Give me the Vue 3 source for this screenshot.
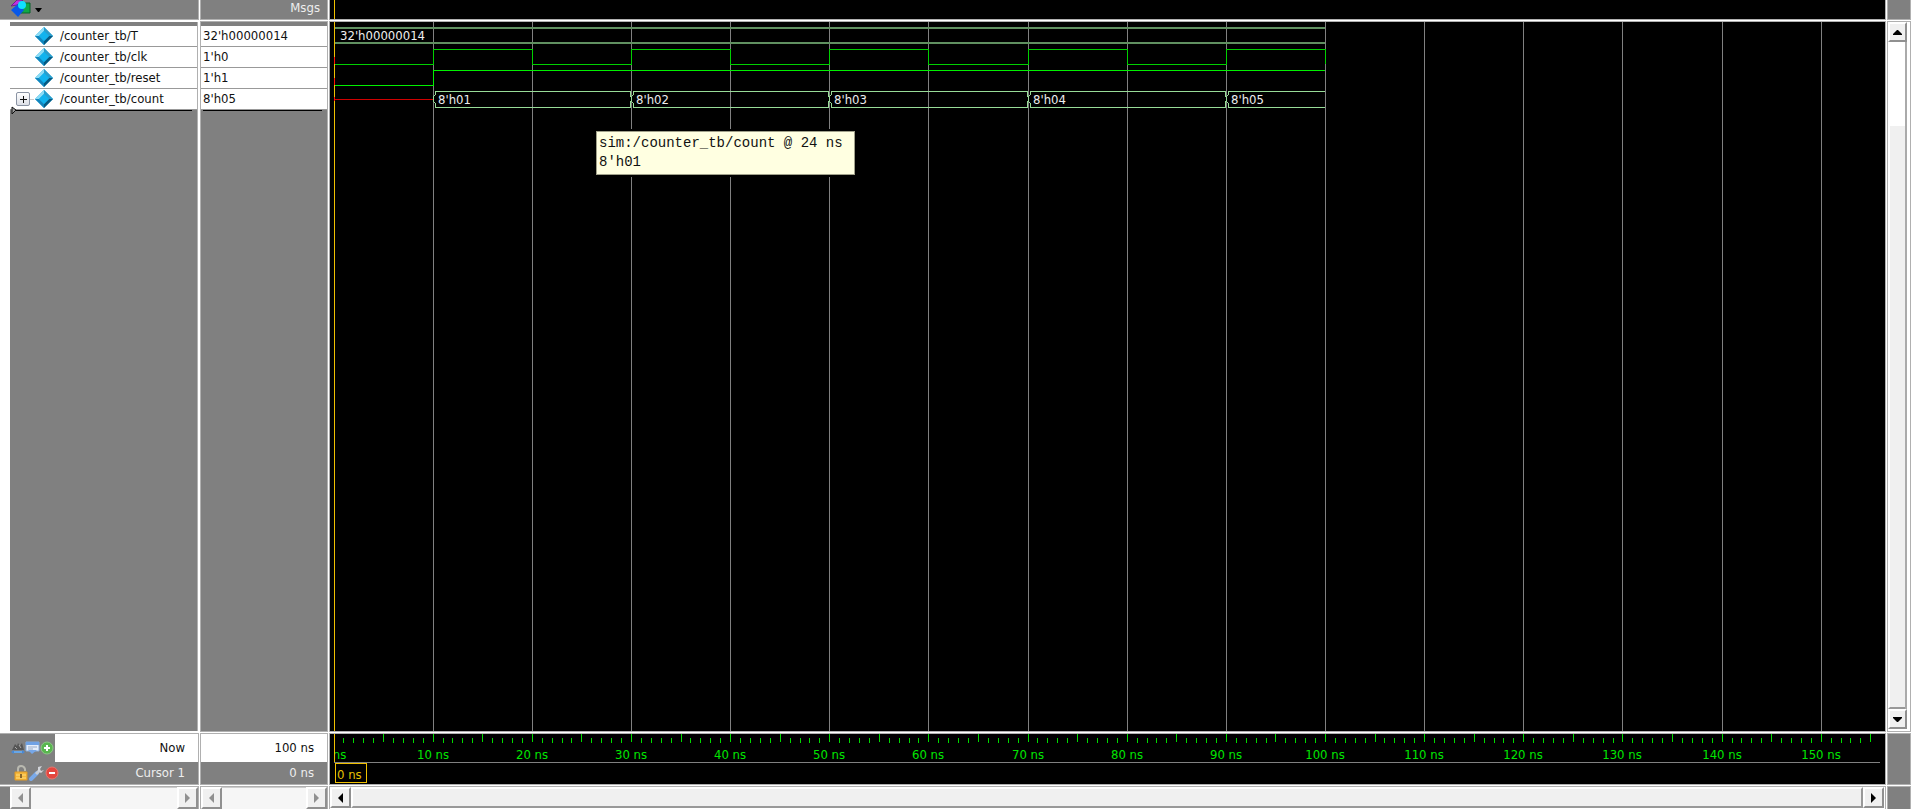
<script setup>
const origin = 4
const nsWidth = 9.915
const at = (ns) => Math.floor(origin + ns * nsWidth)

const signals = [
  { name: '/counter_tb/T', value: "32'h00000014" },
  { name: '/counter_tb/clk', value: "1'h0" },
  { name: '/counter_tb/reset', value: "1'h1" },
  { name: '/counter_tb/count', value: "8'h05", bus: true },
]
const gridTimes = Array.from({ length: 15 }, (_, i) => (i + 1) * 10)
const labelTimes = [0, ...gridTimes]
const ticks = Array.from({ length: 155 }, (_, i) => i + 1)
const segments = [
  { start: 10, end: 30, value: "8'h01" },
  { start: 30, end: 50, value: "8'h02" },
  { start: 50, end: 70, value: "8'h03" },
  { start: 70, end: 90, value: "8'h04" },
  { start: 90, end: 100, value: "8'h05" },
]
const clockPath = () => {
  let d = `M${origin} 42`
  for (let t = 10; t <= 100; t += 10) {
    d += `H${at(t)}V${(t / 10) % 2 ? 27 : 42}`
  }
  return d
}
</script>

<template>
  <main class="viewer">
    <header class="cell head tools">
      <button class="plain menu" aria-label="Object menu">
        <svg width="24" height="19" viewBox="0 0 24 19">
          <path d="M0 6 6 0h6L6 5Z" fill="#c030e0" stroke="#70208a" stroke-width="1" />
          <path d="M10 3h9v10h-9Z" fill="#10a848" stroke="#08642c" />
          <path d="m7 4 6 6-6 7-7-7Z" fill="#0858e8" />
          <circle cx="11" cy="5" r="4" fill="#10e0ff" />
        </svg>
        <svg width="7" height="4" viewBox="0 0 7 4"><path d="M0 0h7L4 4H3Z" fill="#000" /></svg>
      </button>
    </header>
    <div class="cell head msgs">Msgs</div>
    <div class="cell black">
      <svg class="fill"><path :d="`M${origin} 0V19`" class="cursor" /></svg>
    </div>
    <div class="cell side"></div>

    <section class="cell names">
      <ul class="rows">
        <li v-for="s in signals" :key="s.name" class="row">
          <button v-if="s.bus" class="expand" aria-label="Expand count">
            <svg width="7" height="7" viewBox="0 0 7 7"><path d="M0 3h7v1H0ZM3 0h1v7H3Z" fill="#111" /></svg>
          </button>
          <span v-else class="expand-space"></span>
          <span class="link" :class="{ linked: s.bus }"></span>
          <svg class="gem" width="20" height="20" viewBox="0 0 20 20">
            <path d="m10 1 9 9-9 9-9-9Z" fill="#18a5dc" />
            <path d="m10 1-9 9h4l5-5Z" fill="#8cdcf6" />
            <path d="m10 1 9 9h-4l-5-5Z" fill="#2a9dcc" />
            <path d="m1 10 9 9v-4l-5-5Z" fill="#1285bd" />
            <path d="m19 10-9 9v-4l5-5Z" fill="#075a82" />
            <path d="m10 5 5 5-5 5-5-5Z" fill="#12b3ee" />
          </svg>
          <span>{{ s.name }}</span>
        </li>
      </ul>
      <div class="end-line"></div>
      <svg class="marker" width="6" height="9" viewBox="0 0 6 9"><path d="M1 1v7l4-4Z" fill="#999" stroke="#111" /></svg>
    </section>

    <section class="cell values">
      <ul class="rows">
        <li v-for="s in signals" :key="s.name" class="row">{{ s.value }}</li>
      </ul>
      <div class="end-line"></div>
    </section>

    <section class="cell black wave">
      <svg class="fill">
        <path v-for="t in gridTimes" :key="t" :d="`M${at(t)} 0V3000`" class="grid" />
        <path :d="`M${origin} 6H${at(100)}M${origin} 21H${at(100)}`" class="constant" />
        <text x="10" y="18" class="bus-text">32'h00000014</text>
        <path :d="clockPath()" class="clock" />
        <path :d="`M${origin} 63H${at(10)}V48H${at(100)}`" class="reset" />
        <path :d="`M${origin} 77H${at(10)}`" class="unknown" />
        <g v-for="s in segments" :key="s.start">
          <path
            :d="`M${at(s.end)} 69H${at(s.start) + 2}V73L${at(s.start)} 75V79L${at(s.start) + 2} 81V85H${at(s.end)}`"
            class="bus"
          />
          <path
            v-if="s.start > 10"
            :d="`M${at(s.start)} 69H${at(s.start) - 1}V73L${at(s.start)} 75M${at(s.start)} 79L${at(s.start) - 1} 81V85H${at(s.start)}`"
            class="bus"
          />
          <text :x="at(s.start) + 5" y="82" class="bus-text">{{ s.value }}</text>
        </g>
        <path :d="`M${origin} 0V3000`" class="cursor" />
        <path :d="`M${origin} 35V42M${origin} 56V63M${origin} 75V79`" class="initial" />
      </svg>
      <div class="tooltip" role="tooltip">sim:/counter_tb/count @ 24 ns<br />8'h01</div>
    </section>

    <div class="cell vbar">
      <button class="arrow" aria-label="Scroll up">
        <svg width="9" height="5" viewBox="0 0 9 5"><path d="M0 5V4L4 0H5L9 4V5Z" /></svg>
      </button>
      <div class="vtrack"><div class="vthumb"></div></div>
      <button class="arrow" aria-label="Scroll down">
        <svg width="9" height="5" viewBox="0 0 9 5"><path d="M0 0V1L4 5H5L9 1V0Z" /></svg>
      </button>
    </div>

    <section class="cell timing">
      <div class="now-row">
        <div class="icons">
          <button class="plain" aria-label="Find cursor">
            <svg width="14" height="14" viewBox="0 0 14 14">
              <path d="M1 9 4 3l2 2 1-3 2 3 2-3 2 7Z" fill="#555" />
              <path d="m4 6 2 2m2-4 2 3" stroke="#aaa" fill="none" />
              <path d="M1 11h12" stroke="#66a6e8" stroke-width="2" />
              <path d="M3 9 0 11l3 2m8-4 3 2-3 2" fill="#4b87cf" />
            </svg>
          </button>
          <button class="plain" aria-label="Edit grid">
            <svg width="15" height="14" viewBox="0 0 15 14">
              <path d="M1 1h13v9H1Z" fill="#e4eefc" stroke="#86aee0" />
              <path d="M1 1h13v3H1Z" fill="#6fa2e5" />
              <path d="M3 6h9M3 8h5" stroke="#9aabc4" />
              <path d="m3 9 4 4 5-4Z" fill="#76a7e8" />
            </svg>
          </button>
          <button class="plain" aria-label="Add cursor">
            <svg width="14" height="14" viewBox="0 0 14 14">
              <circle cx="7" cy="7" r="6" fill="#59b64f" stroke="#8cc886" />
              <path d="M7 4v6M4 7h6" stroke="#fff" stroke-width="2" />
            </svg>
          </button>
        </div>
        <span class="now">Now</span>
      </div>
      <div class="cursor-row">
        <div class="icons lower">
          <button class="plain" aria-label="Lock cursor">
            <svg width="14" height="16" viewBox="0 0 14 16">
              <path d="M4 7V4q0-3 3-3t4 3v2" fill="none" stroke="#b9b9b0" stroke-width="2" />
              <path d="M1 7h12v8H1Z" fill="#f5b83d" stroke="#e19a25" />
              <path d="M2 10h10M2 13h10" stroke="#ffdc7d" />
              <path d="M7 9v4" stroke="#8a682d" stroke-width="2" />
            </svg>
          </button>
          <button class="plain" aria-label="Configure cursor">
            <svg width="15" height="16" viewBox="0 0 15 16">
              <path d="m2 14 6-6" stroke="#79a9e9" stroke-width="4" stroke-linecap="round" />
              <path d="m7 9 3-3" stroke="#c7cdd5" stroke-width="3" />
              <path d="M9 2v4l3 2 3-3-3 1-1-2 2-3Z" fill="#d2d5da" />
            </svg>
          </button>
          <button class="plain" aria-label="Remove cursor">
            <svg width="14" height="14" viewBox="0 0 14 14">
              <circle cx="7" cy="7" r="6" fill="#e4473f" stroke="#e8766e" />
              <path d="M4 7h6" stroke="#fff" stroke-width="2" />
            </svg>
          </button>
        </div>
        <span>Cursor 1</span>
      </div>
    </section>

    <section class="cell timing">
      <div class="now-row"><span class="now">100 ns</span></div>
      <div class="cursor-row"><span>0 ns</span></div>
    </section>

    <section class="cell black">
      <svg class="fill">
        <path
          v-for="t in ticks"
          :key="t"
          :d="`M${at(t)} ${t % 5 ? 4 : 0}V${t % 5 ? 9 : 8}`"
          class="tick"
        />
        <svg :x="origin" y="0" width="100%" height="28" overflow="hidden">
          <text v-for="t in labelTimes" :key="t" :x="at(t) - origin" y="25" class="time">{{ t }} ns</text>
        </svg>
        <path :d="`M${origin} 28H${at(156)}`" class="grid" />
        <path :d="`M${origin} 0V28`" class="cursor" />
        <rect x="5" y="29" width="31" height="19" class="cursor-box" />
        <text x="7" y="45" class="cursor-text">0 ns</text>
      </svg>
    </section>
    <div class="cell side"></div>

    <div class="cell hbar indented">
      <button class="arrow muted" aria-label="Scroll names left">
        <svg width="5" height="10" viewBox="0 0 5 10"><path d="M5 0 0 5l5 5Z" /></svg>
      </button>
      <div class="htrack"></div>
      <button class="arrow muted" aria-label="Scroll names right">
        <svg width="5" height="10" viewBox="0 0 5 10"><path d="m0 0 5 5-5 5Z" /></svg>
      </button>
    </div>
    <div class="cell hbar">
      <button class="arrow muted" aria-label="Scroll values left">
        <svg width="5" height="10" viewBox="0 0 5 10"><path d="M5 0 0 5l5 5Z" /></svg>
      </button>
      <div class="htrack"></div>
      <button class="arrow muted" aria-label="Scroll values right">
        <svg width="5" height="10" viewBox="0 0 5 10"><path d="m0 0 5 5-5 5Z" /></svg>
      </button>
    </div>
    <div class="cell hbar wide">
      <button class="arrow" aria-label="Scroll time left">
        <svg width="5" height="10" viewBox="0 0 5 10"><path d="M5 0 0 5l5 5Z" /></svg>
      </button>
      <div class="hthumb"></div>
      <button class="arrow" aria-label="Scroll time right">
        <svg width="5" height="10" viewBox="0 0 5 10"><path d="m0 0 5 5-5 5Z" /></svg>
      </button>
    </div>
    <div class="cell side"></div>
  </main>
</template>

<style>
body { background: #fff; }
</style>

<style scoped>
.viewer {
  box-sizing: border-box;
  display: grid;
  grid-template-columns: 198px 126px minmax(0, 1fr) 22px;
  grid-template-rows: 19px minmax(0, 1fr) 50px 22px;
  gap: 3px;
  height: 100vh;
  padding-right: 2px;
  overflow: hidden;
  background: #fff;
  font-family: "DejaVu Sans Condensed", "Noto Sans", sans-serif;
  font-size: 13px;
  line-height: 20px;
  color: #111;
}
.cell { min-width: 0; min-height: 0; box-shadow: 0 0 0 1px #b0b0b0; }
button { box-sizing: border-box; margin: 0; padding: 0; font: inherit; }
svg { display: block; flex: none; }
.plain { border: 0; background: none; }
.head, .side { background: #808080; }
.tools { display: flex; padding-left: 11px; }
.menu { display: flex; align-items: center; }
.msgs { color: #eee; text-align: right; padding-right: 7px; line-height: 16px; }
.black { background: #000; overflow: hidden; }
.fill { width: 100%; height: 100%; }
.names, .values { background: #808080; padding-top: 4px; box-sizing: border-box; }
.names { position: relative; border-left: 10px solid #fff; box-shadow: none; border-right: 1px solid #b0b0b0; }
.rows { list-style: none; margin: 0; padding: 0; background: #fff; }
.row {
  box-sizing: border-box;
  display: flex;
  align-items: center;
  height: 21px;
  border-bottom: 1px solid #999;
  white-space: nowrap;
}
.names .row { padding-left: 6px; }
.values .row { padding-left: 2px; }
.expand, .expand-space { width: 14px; height: 14px; flex: none; }
.expand {
  display: flex;
  align-items: center;
  justify-content: center;
  border: 1px solid #8a93a3;
  border-radius: 2px;
  background: linear-gradient(#fff, #dcdfe6);
}
.link { width: 4px; height: 1px; }
.linked { background: #ccc; }
.gem { margin-right: 6px; }
.end-line { height: 1px; margin: 0 5px 0 6px; background: #000; }
.marker { position: absolute; left: 1px; top: 84px; }
.values .end-line { margin-left: 2px; }
.wave { position: relative; }
.grid, .constant, .clock, .reset, .bus, .unknown, .initial, .cursor, .tick, .cursor-box {
  fill: none;
  stroke-width: 1;
  shape-rendering: crispEdges;
}
.grid { stroke: #808080; }
.constant { stroke: #609060; stroke-width: 2; }
.clock { stroke: #00d000; }
.reset { stroke: #00f000; }
.bus { stroke: #98dc98; }
.unknown { stroke: #d00000; }
.initial { stroke: #ff1000; }
.cursor { stroke: #f0c000; }
.tick { stroke: #00d800; }
.bus-text { fill: #eee; }
.time { fill: #00e600; text-anchor: middle; }
.cursor-box { stroke: #f0c000; }
.cursor-text { fill: #e6c000; }
.tooltip {
  position: absolute;
  left: 266px;
  top: 109px;
  box-sizing: border-box;
  width: 259px;
  padding: 2px;
  border: 1px solid #a0a08a;
  background: #ffffe1;
  box-shadow: 0 0 0 2px #000;
  font-family: "Liberation Mono", monospace;
  font-size: 14px;
  line-height: 19px;
  white-space: nowrap;
}
.timing { background: #808080; }
.now-row, .cursor-row { display: flex; align-items: center; justify-content: space-between; }
.now-row { height: 28px; }
.cursor-row { height: 22px; padding-right: 13px; color: #eee; justify-content: flex-end; }
.cursor-row .icons { margin-right: auto; }
.now { flex: 1; line-height: 28px; background: #fff; padding-right: 13px; text-align: right; }
.icons { display: flex; align-items: center; padding-left: 11px; padding-right: 1px; }
.lower { padding-left: 14px; gap: 1px; }
.hbar { display: flex; background: #fff; }
.indented { border-left: 10px solid #808080; }
.arrow {
  display: flex;
  align-items: center;
  justify-content: center;
  flex: none;
  width: 21px;
  background: #f0f0f0;
  border: 2px solid;
  border-color: #fff #909090 #909090 #fff;
}
.arrow path { fill: #000; }
.muted path { fill: #909090; }
.htrack { flex: 1; background: #f6f6f6; border-top: 1px solid #ccc; }
.hthumb, .vthumb { flex: 1; background: #f0f0f0; border: 2px solid; border-color: #fff #999 #999 #fff; }
.wide { padding-right: 1px; padding-bottom: 1px; }
.vbar { display: flex; flex-direction: column; background: #fff; padding-bottom: 2px; }
.vbar .arrow { width: 19px; height: 20px; }
.vtrack { display: flex; flex: 1; flex-direction: column; width: 19px; box-sizing: border-box; border-right: 2px solid #aaa; }
.vthumb { margin-top: 82px; border-right: 0; }
</style>
